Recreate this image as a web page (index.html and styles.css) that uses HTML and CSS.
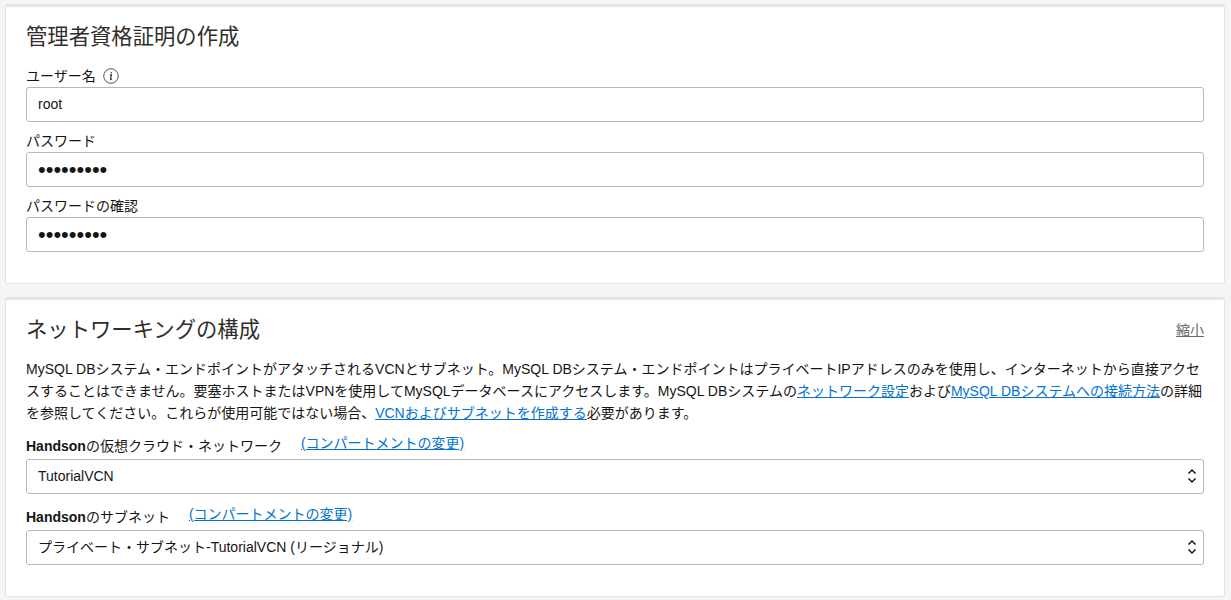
FILE: index.html
```html
<!DOCTYPE html>
<html lang="ja">
<head>
<meta charset="utf-8">
<title>MySQL DBシステム</title>
<link rel="stylesheet" href="styles.css">
</head>
<body>
<section class="card card-admin">
  <h2 class="card-title">管理者資格証明の作成</h2>
  <div class="field">
    <label class="label">ユーザー名
      <svg class="info" viewBox="0 0 16 16" width="16" height="16"><circle cx="8" cy="8" r="7.3" fill="none" stroke="#555" stroke-width="1"/><path d="M6.8 6.9h1.7L7.5 11.2c0 .4.6.4 1.4-.4M8.4 4.1v1.2" fill="none" stroke="#333" stroke-width="1.2"/></svg>
    </label>
    <input class="input" type="text" value="root">
  </div>
  <div class="field">
    <label class="label">パスワード</label>
    <input class="input password" type="password" value="123456789">
  </div>
  <div class="field">
    <label class="label">パスワードの確認</label>
    <input class="input password" type="password" value="123456789">
  </div>
</section>
<section class="card card-net">
  <div class="head">
    <h2 class="card-title">ネットワーキングの構成</h2>
    <a class="collapse" href="#">縮小</a>
  </div>
  <p class="desc">MySQL DBシステム・エンドポイントがアタッチされるVCNとサブネット。MySQL DBシステム・エンドポイントはプライベートIPアドレスのみを使用し、インターネットから直接アクセスすることはできません。要塞ホストまたはVPNを使用してMySQLデータベースにアクセスします。MySQL DBシステムの<a href="#">ネットワーク設定</a>および<a href="#">MySQL DBシステムへの接続方法</a>の詳細を参照してください。これらが使用可能ではない場合、<a href="#">VCNおよびサブネットを作成する</a>必要があります。</p>
  <div class="net-field">
    <div class="label-row"><label class="label"><b>Handson</b>の仮想クラウド・ネットワーク</label><a class="change" href="#">(コンパートメントの変更)</a></div>
    <div class="select-wrap">
      <select class="input select"><option>TutorialVCN</option></select>
      <svg class="chevrons" viewBox="0 0 12 18" width="12" height="18"><path d="M2.5 6.5 6 3l3.5 3.5M2.5 11.5 6 15l3.5-3.5" fill="none" stroke="#161513" stroke-width="1.5"/></svg>
    </div>
  </div>
  <div class="net-field">
    <div class="label-row"><label class="label"><b>Handson</b>のサブネット</label><a class="change" href="#">(コンパートメントの変更)</a></div>
    <div class="select-wrap">
      <select class="input select"><option>プライベート・サブネット-TutorialVCN (リージョナル)</option></select>
      <svg class="chevrons" viewBox="0 0 12 18" width="12" height="18"><path d="M2.5 6.5 6 3l3.5 3.5M2.5 11.5 6 15l3.5-3.5" fill="none" stroke="#161513" stroke-width="1.5"/></svg>
    </div>
  </div>
</section>
</body>
</html>
```
FILE: styles.css
```css
* { box-sizing: border-box; }
html, body { height: 600px; overflow: hidden; }
body {
  margin: 0;
  padding: 4px 6px 0 5px;
  background: #f5f5f5;
  color: #161513;
  font-family: "Liberation Sans", "Noto Sans CJK JP", sans-serif;
  font-size: 14px;
}
.card {
  background: #fff;
  border: 1px solid #e4e4e4;
  border-top: 3px solid #e3e3e8;
  border-radius: 3px;
  padding: 0 20px;
}
.card-admin { height: 280px; padding-top: 15px; margin-bottom: 13px; }
.card-net { height: 300px; padding-top: 15px; }
.card-title {
  margin: 0;
  font-size: 21.33px;
  font-weight: 400;
  line-height: 30px;
  color: #312d2a;
}
.card-admin .card-title { margin-bottom: 14px; }
.label {
  display: block;
  line-height: 20px;
  height: 21px;
}
.label b { font-weight: 700; }
.info { vertical-align: -3px; margin-left: 3px; }
.field { margin-bottom: 9px; }
.net-field { margin-bottom: 13px; }
.input {
  display: block;
  width: 100%;
  height: 35px;
  border: 1px solid #b5b8c0;
  border-radius: 3px;
  background: #fff;
  color: #161513;
  padding: 0 11px 2px;
  font-family: inherit;
  font-size: 14px;
  outline: none;
}
.password { font-size: 22px; padding-bottom: 0; }
.head { display: flex; justify-content: space-between; align-items: center; }
.collapse { color: #6b6b70; font-size: 14px; line-height: 20px; }
.desc {
  margin: 13px 0 12px;
  line-height: 22px;
  font-size: 14px;
  color: #161513;
}
a { color: #0572ce; }
.label-row { display: flex; gap: 19px; height: 23px; line-height: 20px; }
.change { position: relative; top: -3px; }
.select { appearance: none; -webkit-appearance: none; padding-right: 30px; }
.select-wrap { position: relative; }
.chevrons { position: absolute; right: 6px; top: 8px; }
```
